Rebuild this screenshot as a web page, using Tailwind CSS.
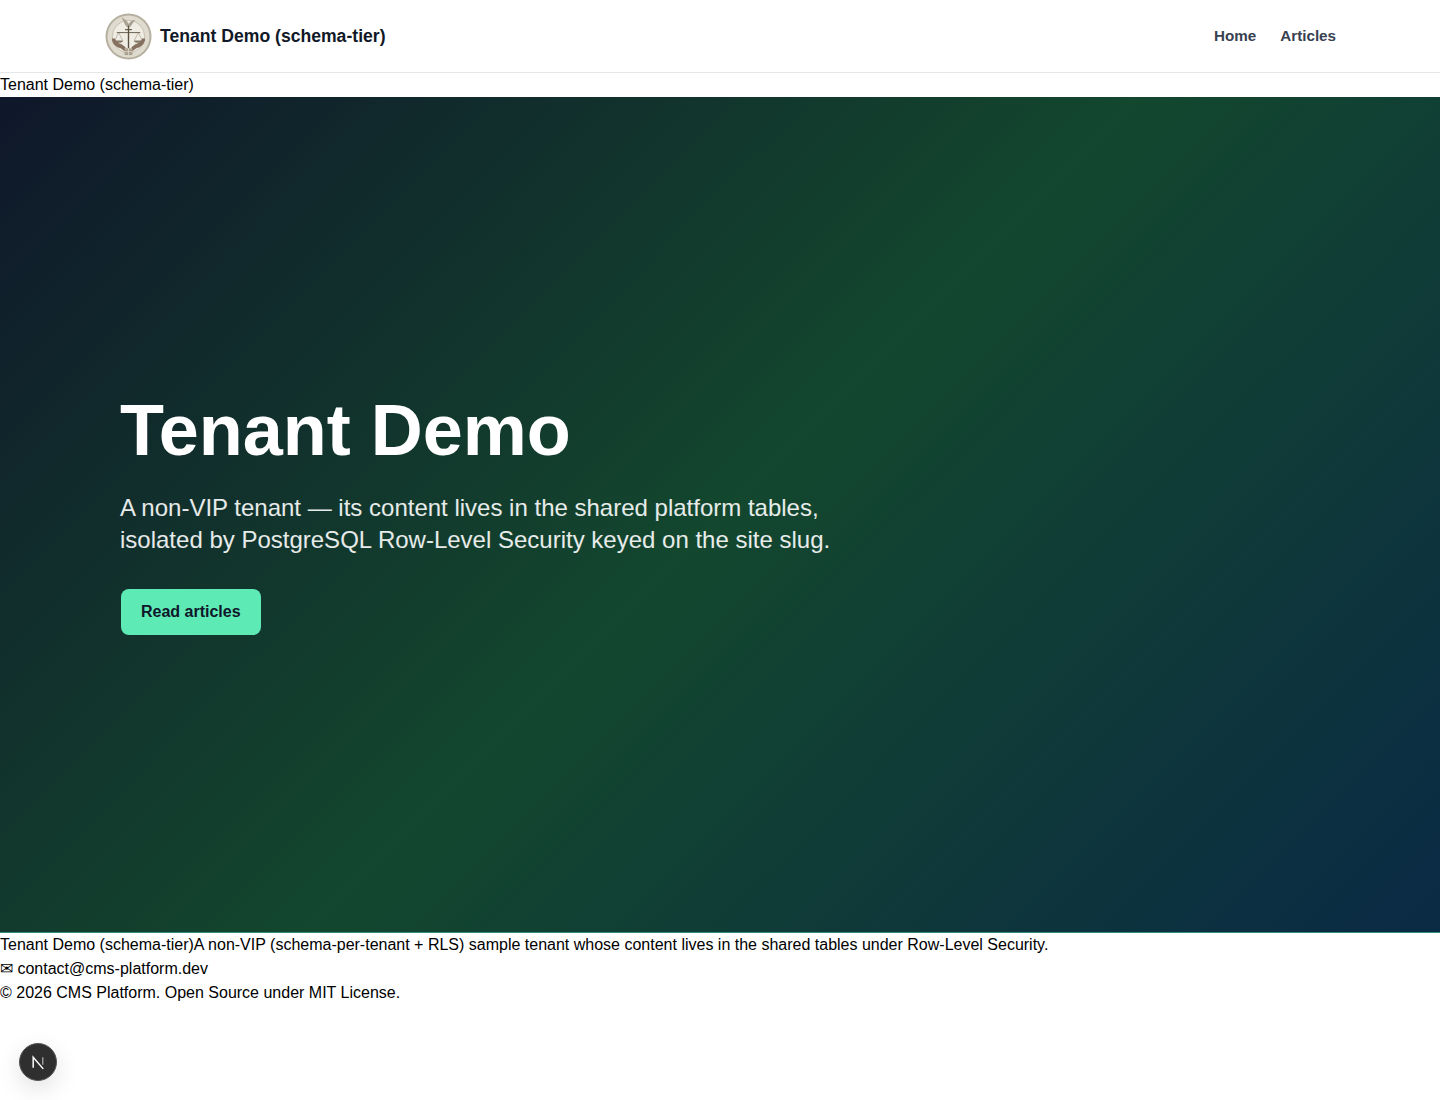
<!DOCTYPE html>
<html lang="en">
<head>
  <meta charset="UTF-8">
  <meta name="viewport" content="width=device-width, initial-scale=1.0">
  <title>Tenant Demo (schema-tier)</title>
  <script src="https://cdn.jsdelivr.net/npm/@tailwindcss/browser@4"></script>
</head>
<body class="bg-white text-black font-['Liberation_Sans',Arial,sans-serif] text-base leading-6 h-[1100px] overflow-hidden relative">
  <!-- top nav -->
  <header class="h-[73px] border-b border-[#e5e7eb] bg-white pl-[105px] pr-[104px] flex items-center justify-between">
    <a href="#" class="flex items-center gap-[8px]">
      <svg viewBox="0 0 48 48" class="w-[47px] h-[47px]">
        <circle cx="24" cy="24" r="23.5" fill="#b5af9f"/>
        <circle cx="24" cy="24" r="21.5" fill="#dfdbcf"/>
        <circle cx="24" cy="24" r="16.5" fill="#efece3" stroke="#bdb6a6" stroke-width="0.8"/>
        <!-- dove -->
        <path d="M17 4l5 4 2 3 3-3 4-1-3 4-2 3h-4l-2-3z" fill="#a8a291"/>
        <!-- scales -->
        <path d="M24 13v23" stroke="#5a5040" stroke-width="1.4"/>
        <path d="M20.5 17h7" stroke="#5a5040" stroke-width="1.1"/>
        <path d="M12 20h24" stroke="#5a5040" stroke-width="0.9"/>
        <path d="M14 20l-4 8M14 20l4 8M34 20l-4 8M34 20l4 8" stroke="#8d8372" stroke-width="0.5"/>
        <path d="M9.5 28a4.5 2.5 0 0 0 9 0zM29.5 28a4.5 2.5 0 0 0 9 0z" fill="#857b6a"/>
        <!-- hands -->
        <path d="M7 26c0 6 5 9 9 10l4 3 1-4-4-3c-3-1-6-3-7-6zM41 26c0 6-5 9-9 10l-4 3-1-4 4-3c3-1 6-3 7-6z" fill="#86705f"/>
        <path d="M20 36h8v7h-8z" fill="#aaa18f"/>
        <path d="M24 36v7M20 39.5h8" stroke="#e4e0d4" stroke-width="0.7"/>
      </svg>
      <span class="text-[17.6px] leading-7 font-bold text-[#111827]">Tenant Demo (schema-tier)</span>
    </a>
    <nav class="flex items-center gap-6 text-[15.2px] font-bold text-[#374151]">
      <a href="#">Home</a>
      <a href="#">Articles</a>
    </nav>
  </header>
  <div>Tenant Demo (schema-tier)</div>

  <!-- hero -->
  <section class="h-[836px] border-b border-[#2f8f78] bg-[linear-gradient(135deg,#0f172a_0%,#13472e_50%,#0a2a45_100%)] flex items-center pl-[120px]">
    <div class="max-w-[768px]">
      <h1 class="text-[72px] leading-[72px] font-bold text-white mb-[26px]">Tenant Demo</h1>
      <p class="text-[24px] leading-8 text-white/90 mb-[33px] w-[740px]">A non-VIP tenant — its content lives in the shared platform tables, isolated by PostgreSQL Row-Level Security keyed on the site slug.</p>
      <a href="#" class="inline-block ml-px bg-[#5eeab5] text-[#0f172a] font-bold rounded-lg px-5 py-[11px]">Read articles</a>
    </div>
  </section>

  <!-- footer, left unstyled -->
  <footer>
    <div>Tenant Demo (schema-tier)A non-VIP (schema-per-tenant + RLS) sample tenant whose content lives in the shared tables under Row-Level Security.</div>
    <div>✉ contact@cms-platform.dev</div>
    <div>© 2026 CMS Platform. Open Source under MIT License.</div>
  </footer>

  <!-- next dev indicator -->
  <div class="absolute left-[19px] top-[1043px] w-[38px] h-[38px] rounded-full bg-[#2f2f2f] border border-[#555] shadow-[0_8px_24px_rgba(0,0,0,0.12)] flex items-center justify-center">
    <svg viewBox="0 0 16 16" class="w-[17px] h-[17px]" fill="none">
      <path d="M3 13V3l9.5 11" stroke="#fff" stroke-width="1.4"/>
      <path d="M12 3v7" stroke="#999" stroke-width="1.4"/>
    </svg>
  </div>
</body>
</html>
